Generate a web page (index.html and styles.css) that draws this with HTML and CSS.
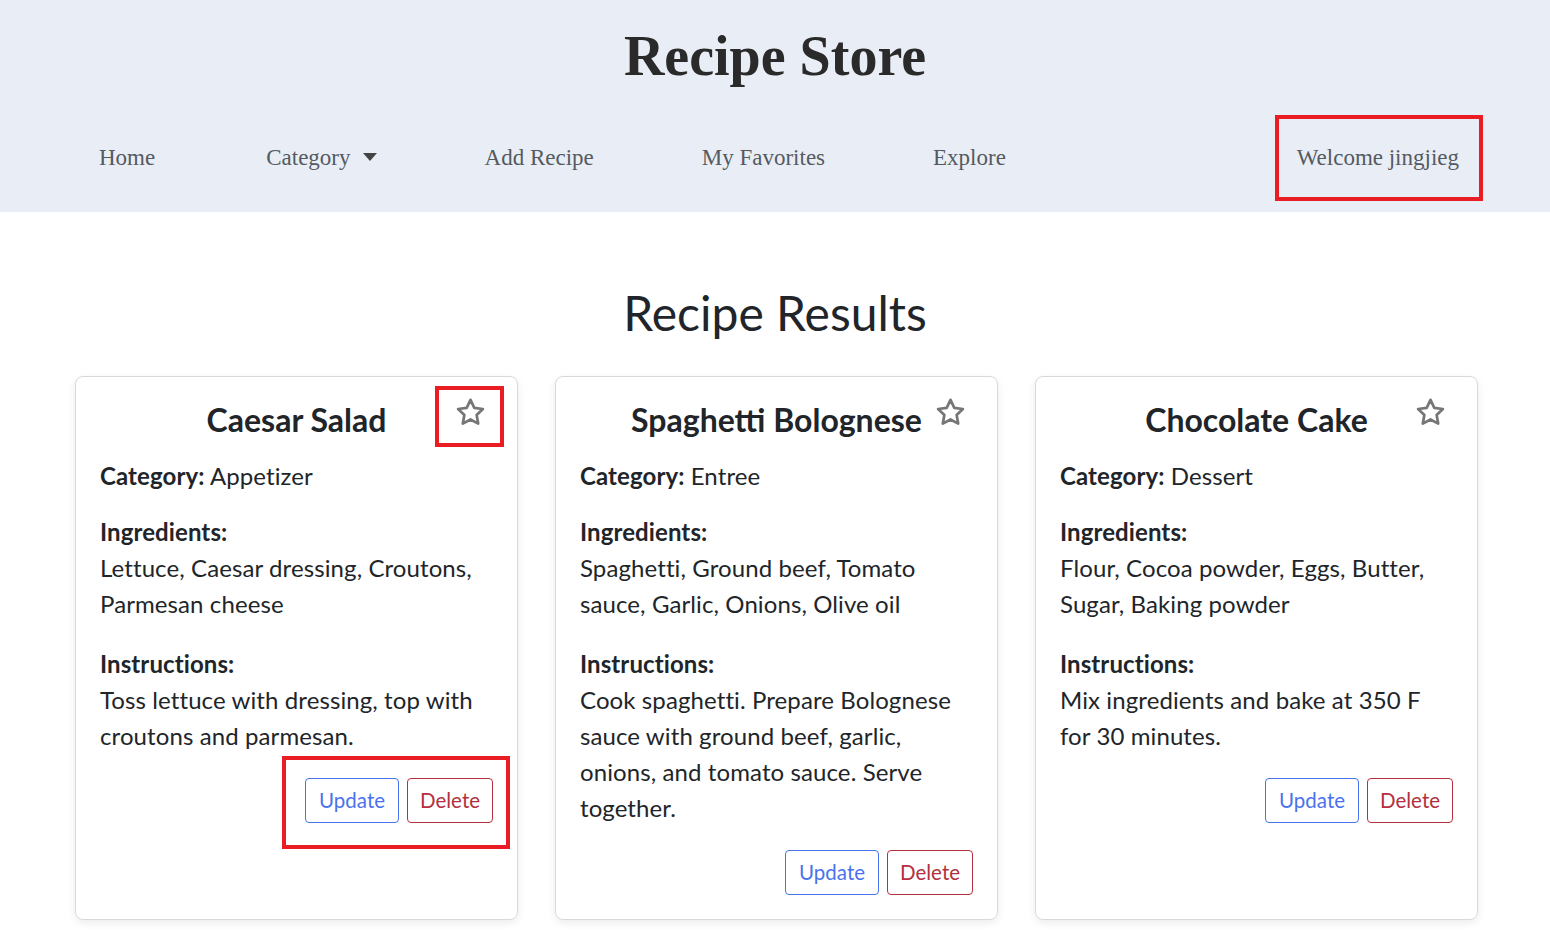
FILE: index.html
```html
<!DOCTYPE html>
<html lang="en">
<head>
<meta charset="utf-8">
<title>Recipe Store</title>
<link rel="stylesheet" href="styles.css">
</head>
<body>
<header class="site-header">
  <h1 class="brand">Recipe Store</h1>
  <nav class="nav">
    <a class="nav-link" href="#">Home</a>
    <a class="nav-link dropdown" href="#">Category <span class="caret"></span></a>
    <a class="nav-link" href="#">Add Recipe</a>
    <a class="nav-link" href="#">My Favorites</a>
    <a class="nav-link" href="#">Explore</a>
    <a class="nav-link welcome" href="#">Welcome jingjieg</a>
  </nav>
</header>
<main class="main">
  <h2 class="page-title">Recipe Results</h2>
  <div class="cards">
    <article class="card">
      <h3 class="card-title">Caesar Salad</h3>
      <button class="fav" aria-label="favorite"><svg viewBox="0 0 24 24" class="star"><polygon points="12,2.2 14.95,8.4 21.6,9.3 16.75,13.95 17.95,20.6 12,17.4 6.05,20.6 7.25,13.95 2.4,9.3 9.05,8.4"/></svg></button>
      <div class="mark mark-star"></div>
      <p class="field cat"><strong>Category:</strong> Appetizer</p>
      <p class="label">Ingredients:</p>
      <p class="field ing">Lettuce, Caesar dressing, Croutons, Parmesan cheese</p>
      <p class="label">Instructions:</p>
      <p class="field ins">Toss lettuce with dressing, top with croutons and parmesan.</p>
      <div class="actions">
        <button class="btn btn-update">Update</button>
        <button class="btn btn-delete">Delete</button>
      </div>
      <div class="mark mark-actions"></div>
    </article>
    <article class="card">
      <h3 class="card-title">Spaghetti Bolognese</h3>
      <button class="fav" aria-label="favorite"><svg viewBox="0 0 24 24" class="star"><polygon points="12,2.2 14.95,8.4 21.6,9.3 16.75,13.95 17.95,20.6 12,17.4 6.05,20.6 7.25,13.95 2.4,9.3 9.05,8.4"/></svg></button>
      <p class="field cat"><strong>Category:</strong> Entree</p>
      <p class="label">Ingredients:</p>
      <p class="field ing">Spaghetti, Ground beef, Tomato sauce, Garlic, Onions, Olive oil</p>
      <p class="label">Instructions:</p>
      <p class="field ins">Cook spaghetti. Prepare Bolognese sauce with ground beef, garlic, onions, and tomato sauce. Serve together.</p>
      <div class="actions">
        <button class="btn btn-update">Update</button>
        <button class="btn btn-delete">Delete</button>
      </div>
    </article>
    <article class="card">
      <h3 class="card-title">Chocolate Cake</h3>
      <button class="fav" aria-label="favorite"><svg viewBox="0 0 24 24" class="star"><polygon points="12,2.2 14.95,8.4 21.6,9.3 16.75,13.95 17.95,20.6 12,17.4 6.05,20.6 7.25,13.95 2.4,9.3 9.05,8.4"/></svg></button>
      <p class="field cat"><strong>Category:</strong> Dessert</p>
      <p class="label">Ingredients:</p>
      <p class="field ing">Flour, Cocoa powder, Eggs, Butter, Sugar, Baking powder</p>
      <p class="label">Instructions:</p>
      <p class="field ins">Mix ingredients and bake at 350 F for 30 minutes.</p>
      <div class="actions">
        <button class="btn btn-update">Update</button>
        <button class="btn btn-delete">Delete</button>
      </div>
    </article>
  </div>
</main>
</body>
</html>
```

FILE: styles.css
```css
* { box-sizing: border-box; }
html, body { margin: 0; padding: 0; }
body {
  background: #ffffff;
  color: #212529;
  font-family: Lato, "Open Sans", sans-serif;
}

.site-header {
  background: #e9eef6;
  padding: 23px 0 11px;
}
.brand {
  margin: 0;
  text-align: center;
  font-family: "Liberation Serif", "DejaVu Serif", serif;
  font-weight: 700;
  font-size: 56px;
  line-height: 67px;
  color: #2a2a2a;
}
.nav {
  display: flex;
  align-items: center;
  gap: 108px;
  margin-top: 25px;
  padding: 0 67px 0 99px;
}
.nav-link {
  font-family: "Liberation Serif", "DejaVu Serif", serif;
  font-size: 23px;
  color: #555a60;
  text-decoration: none;
  display: flex;
  align-items: center;
  gap: 12px;
}
.nav-link:first-child { padding-right: 3px; }
.caret {
  width: 0;
  height: 0;
  border-left: 7px solid transparent;
  border-right: 7px solid transparent;
  border-top: 8px solid #444;
  margin-top: -2px;
}
.welcome {
  margin-left: auto;
  height: 86px;
  padding: 0 20px 0 18px;
  border: 4px solid #ea1c24;
}

.main {
  padding: 72px 0 40px;
}
.page-title {
  margin: 0;
  text-align: center;
  font-size: 48px;
  font-weight: 400;
  line-height: 1.2;
  color: #212529;
}
.cards {
  display: grid;
  grid-template-columns: repeat(3, 443px);
  gap: 37px;
  justify-content: start;
  margin-top: 34px;
  padding-left: 75px;
}
.card {
  position: relative;
  border: 1px solid #d9d9d9;
  border-radius: 8px;
  box-shadow: 0 3px 8px rgba(0,0,0,0.08);
  padding: 24px 24px 24px;
  display: flex;
  flex-direction: column;
  align-items: stretch;
}
.card-title {
  margin: 0;
  text-align: center;
  font-size: 32px;
  font-weight: 700;
  line-height: 1.2;
  color: #212529;
}
.fav {
  position: absolute;
  top: 20px;
  right: 31px;
  width: 31px;
  height: 31px;
  padding: 0;
  border: 0;
  background: transparent;
}
.star {
  width: 31px;
  height: 31px;
  display: block;
  fill: none;
  stroke: #767676;
  stroke-width: 2.1;
  stroke-linejoin: round;
}
.field, .label {
  margin: 0;
  font-size: 24px;
  line-height: 36px;
  letter-spacing: 0.1px;
  color: #212529;
}
.field strong, .label { font-weight: 700; }
.cat { margin-top: 19px; }
.label { margin-top: 20px; }
.ing + .label { margin-top: 24px; }
.actions {
  display: flex;
  justify-content: flex-end;
  gap: 8px;
  margin-top: 24px;
}
.btn {
  font-family: Lato, "Open Sans", sans-serif;
  font-size: 20.5px;
  line-height: 31px;
  padding: 6px 13px;
  background: #fff;
  border-radius: 4px;
  border: 1px solid;
}
.btn-update { color: #4a72ee; border-color: #4a72ee; padding: 6px 13px; }
.btn-delete { color: #b3303d; border-color: #b3303d; padding: 6px 12px; }

.mark {
  position: absolute;
  border: 4px solid #ea1c24;
  pointer-events: none;
}
.mark-star {
  top: 9px;
  right: 13px;
  width: 69px;
  height: 61px;
}
.mark-actions {
  top: 379px;
  right: 7px;
  width: 228px;
  height: 93px;
}
```
